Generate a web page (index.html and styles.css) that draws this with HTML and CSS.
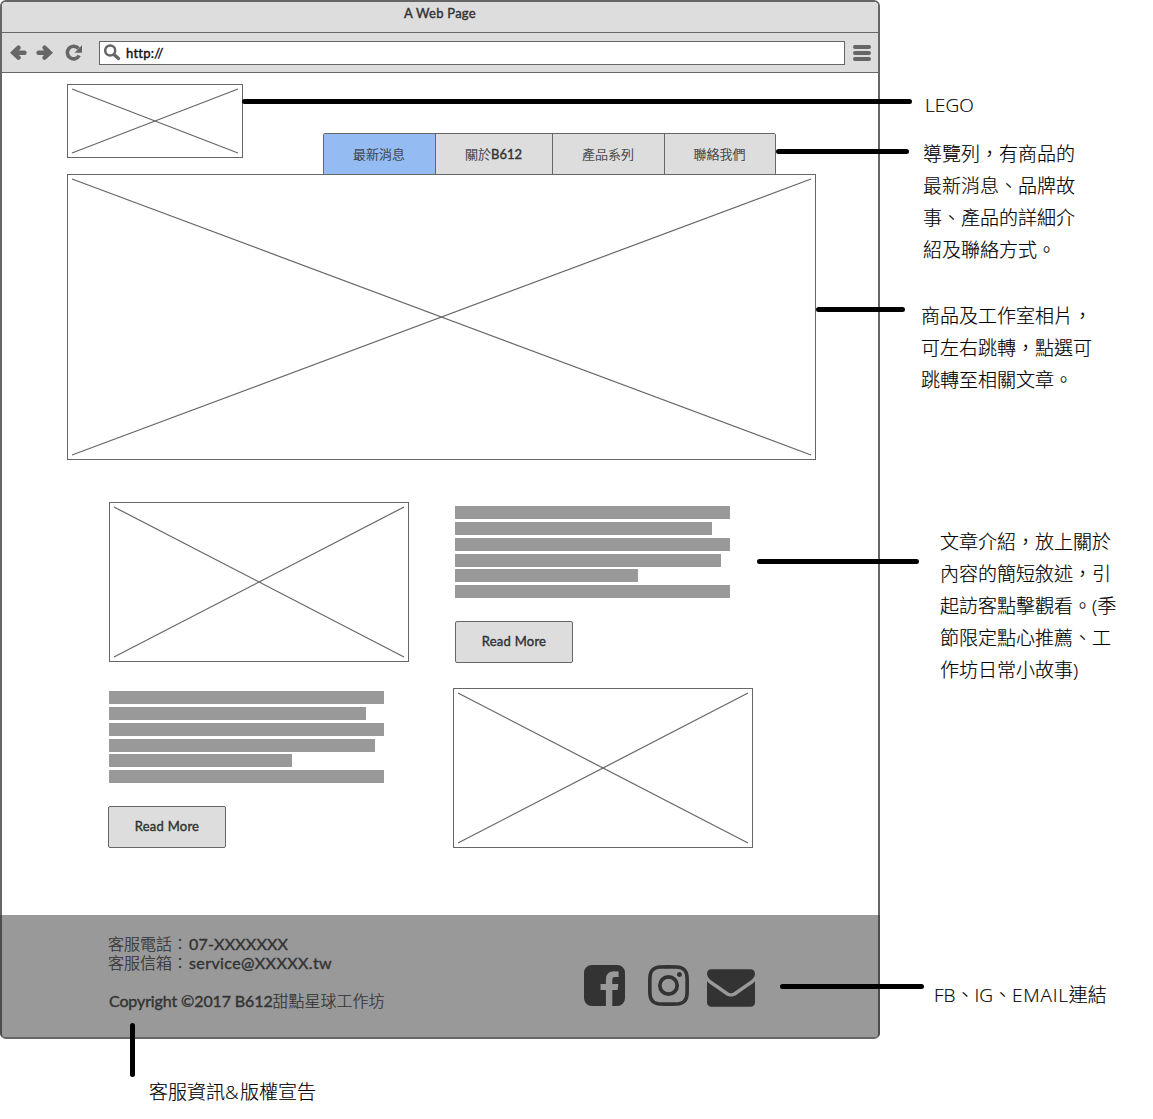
FILE: index.html
```html
<!DOCTYPE html>
<html lang="zh-Hant">
<head>
<meta charset="utf-8">
<title>A Web Page</title>
<link rel="stylesheet" href="styles.css">
</head>
<body>
<div class="board">
  <div class="browser">
    <div class="titlebar"><span class="page-title">A Web Page</span></div>
    <div class="toolbar">
      <svg class="nav-icons" width="74" height="20" viewBox="0 0 74 20" fill="none" stroke="#666">
        <path d="M14.500 9.700H4.500M8.500 4.700L3.200 9.700l5.300 5" stroke-width="4.400" stroke-linecap="round"/>
        <path d="M28.500 9.700h10M34.500 4.700L39.800 9.700l-5.300 5" stroke-width="4.400" stroke-linecap="round"/>
        <path d="M69.200 12.500A6.300 6.300 0 1 1 68.500 5.500" stroke-width="3.600"/>
        <path d="M72 2.200v7.500h-7.500z" fill="#666" stroke="none"/>
      </svg>
      <div class="address">
        <svg width="18" height="18" viewBox="0 0 18 18" fill="none" stroke="#666">
          <circle cx="6.200" cy="6.500" r="5" stroke-width="2.500"/>
          <path d="M10.500 11l4 3.500" stroke-width="3.400" stroke-linecap="round"/>
        </svg>
        <span class="url">http://</span>
      </div>
      <div class="menu"><i></i><i></i><i></i></div>
    </div>
    <div class="page">
      <header class="header">
        <div class="placeholder logo"><svg><line x2="100%" y2="100%"/><line x1="100%" x2="0" y2="100%"/></svg></div>
        <nav class="tabs">
          <a class="tab active">最新消息</a>
          <a class="tab wide">關於<span class="latin">B612</span></a>
          <a class="tab">產品系列</a>
          <a class="tab last">聯絡我們</a>
        </nav>
      </header>
      <div class="placeholder hero"><svg><line x2="100%" y2="100%"/><line x1="100%" x2="0" y2="100%"/></svg></div>
      <main class="articles">
        <section class="article">
          <div class="placeholder photo"><svg><line x2="100%" y2="100%"/><line x1="100%" x2="0" y2="100%"/></svg></div>
          <div class="summary">
            <div class="lines"><i></i><i class="l2"></i><i></i><i class="l4"></i><i class="l5"></i><i></i></div>
            <a class="button">Read More</a>
          </div>
        </section>
        <section class="article reverse">
          <div class="summary">
            <div class="lines"><i></i><i class="l2"></i><i></i><i class="l4"></i><i class="l5"></i><i></i></div>
            <a class="button">Read More</a>
          </div>
          <div class="placeholder photo"><svg><line x2="100%" y2="100%"/><line x1="100%" x2="0" y2="100%"/></svg></div>
        </section>
      </main>
    </div>
    <footer class="footer">
      <div class="contact">
        <p>客服電話：<span class="phone">07-XXXXXXX</span></p>
        <p>客服信箱：<span class="mail">service@XXXXX.tw</span></p>
        <p class="copyright"><span class="copy">Copyright ©2017 B612</span>甜點星球工作坊</p>
      </div>
      <div class="social">
        <svg width="41" height="41" viewBox="0 128 1536 1536"><path d="M1248 128q119 0 203.500 84.500t84.500 203.500v960q0 119-84.500 203.500t-203.500 84.500h-188v-595h199l30-232h-229v-148q0-56 23.500-84t91.500-28l122-1v-207q-63-9-178-9-136 0-217.500 80t-81.500 226v171h-200v232h200v595h-532q-119 0-203.500-84.500t-84.500-203.500v-960q0-119 84.500-203.500t203.500-84.500h960z"/></svg>
        <svg class="ig" width="41" height="41" viewBox="0 128 1536 1536"><path d="M1024 896q0-106-75-181t-181-75-181 75-75 181 75 181 181 75 181-75 75-181zm138 0q0 164-115 279t-279 115-279-115-115-279 115-279 279-115 279 115 115 279zm108-410q0 38-27 65t-65 27-65-27-27-65 27-65 65-27 65 27 27 65zm-502-220q-7 0-76.500-.5t-105.500 0-96.500 3-103 10-71.500 18.500q-50 20-88 58t-58 88q-11 29-18.500 71.500t-10 103-3 96.500 0 105.500.5 76.500-.5 76.500 0 105.500 3 96.500 10 103 18.500 71.500q20 50 58 88t88 58q29 11 71.500 18.500t103 10 96.500 3 105.500 0 76.500-.5 76.500.5 105.500 0 96.500-3 103-10 71.500-18.500q50-20 88-58t58-88q11-29 18.500-71.500t10-103 3-96.500 0-105.500-.5-76.500.5-76.500 0-105.500-3-96.500-10-103-18.500-71.500q-20-50-58-88t-88-58q-29-11-71.500-18.500t-103-10-96.500-3-105.500 0-76.500.5zm768 630q0 229-5 317-10 208-124 322t-322 124q-88 5-317 5t-317-5q-208-10-322-124t-124-322q-5-88-5-317t5-317q10-208 124-322t322-124q88-5 317-5t317 5q208 10 322 124t124 322q5 88 5 317z"/></svg>
        <svg class="envelope" width="48" height="38" viewBox="0 256 1792 1408"><path d="M1792 710v794q0 66-47 113t-113 47h-1472q-66 0-113-47t-47-113v-794q44 49 101 87 362 246 497 345 57 42 92.500 65.500t94.500 48 110 24.500h2q51 0 110-24.500t94.500-48 92.500-65.500q170-123 498-345 57-39 100-87zm0-294q0 79-49 151t-122 123q-376 261-468 325-10 7-42.500 31t-54 38.500-52 32.500-57.500 27-50 9h-2q-23 0-50-9t-57.500-27-52-32.500-54-38.500-42.500-31q-91-64-262-182.500t-205-142.500q-62-42-117-115.500t-55-136.500q0-78 41.500-130t118.500-52h1472q65 0 112.500 47t47.500 113z"/></svg>
      </div>
    </footer>
  </div>
  <aside class="notes">
    <p class="note note-logo">LEGO</p>
    <p class="note note-nav">導覽列，有商品的<br>最新消息、品牌故<br>事、產品的詳細介<br>紹及聯絡方式。</p>
    <p class="note note-hero">商品及工作室相片，<br>可左右跳轉，點選可<br>跳轉至相關文章。</p>
    <p class="note note-article">文章介紹，放上關於<br>內容的簡短敘述，引<br>起訪客點擊觀看。(季<br>節限定點心推薦、工<br>作坊日常小故事)</p>
    <p class="note note-social">FB、IG、<span class="email">EMAIL</span>連結</p>
  </aside>
  <p class="note note-footer">客服資訊<span class="amp">&amp;</span>版權宣告</p>
  <svg class="connectors" width="1153" height="1119" viewBox="0 0 1153 1119">
    <path d="M244.500 101.500H909.500M778.500 151.500H906.500M818.500 309.500H902.500M759.500 561.500H916.500M782.500 986.500H921.500M132.500 1025.500V1074.500"/>
  </svg>
</div>
</body>
</html>
```
FILE: styles.css
```css
* { box-sizing: border-box; }
body { margin: 0; background: #fff; color: #333; font-family: Lato, "Noto Sans CJK TC", sans-serif; }
p { margin: 0; }
i { display: block; }
svg { display: block; flex: none; }

.board {
  position: relative;
  display: grid;
  grid-template-columns: 880px 273px;
  grid-template-rows: 1039px 80px;
  width: 1153px;
  height: 1119px;
  overflow: hidden;
}
.browser {
  display: flex;
  flex-direction: column;
  border: 2px solid #666;
  border-radius: 6px;
}
.page-title, .url, .latin, .button, .contact span {
  font-weight: 400;
  -webkit-text-stroke: .4px currentColor;
}
.titlebar {
  height: 31px;
  border-radius: 4px 4px 0 0;
  background: #ddd;
  border-bottom: 1px solid #666;
  text-align: center;
  font-size: 13px;
  line-height: 23px;
}
.page-title { letter-spacing: .25px; }
.toolbar {
  display: flex;
  align-items: center;
  height: 40px;
  padding: 0 7px 0 8px;
  background: #ddd;
  border-bottom: 1px solid #666;
}
.address {
  display: flex;
  align-items: center;
  width: 746px;
  height: 24px;
  margin-left: 15px;
  padding-left: 4px;
  background: #fff;
  border: 1px solid #666;
  color: #111;
  font-size: 13px;
}
.url { margin-left: 4px; letter-spacing: .25px; }
.menu { display: grid; gap: 2px; width: 18px; margin-left: 8px; }
.menu i { height: 4px; border-radius: 2px; background: #666; }

.page { height: 842px; padding: 0 63px 0 65px; }
.header { display: flex; height: 101px; padding-top: 11px; }
.placeholder { border: 1px solid #666; padding: 4px; }
.placeholder svg { width: 100%; height: 100%; overflow: visible; stroke: #666; stroke-width: 1.200; }
.logo { width: 176px; height: 74px; }
.tabs {
  display: flex;
  align-self: flex-end;
  height: 42px;
  margin: 0 0 -1px 80px;
  border: 1px solid #666;
  border-radius: 2px;
}
.tab {
  width: 112px;
  padding-right: 1px;
  border-right: 1px solid #666;
  background: #ddd;
  text-align: center;
  font-size: 13px;
  font-weight: 300;
  line-height: 40px;
  -webkit-text-stroke: .2px currentColor;
}
.tab.active { background: #94bbf2; }
.tab.wide { width: 117px; }
.tab.last { width: 110px; border-right: 0; }
.hero { width: 749px; height: 286px; }

.articles { display: grid; gap: 26px; padding: 42px 0 0 42px; }
.article { display: flex; gap: 46px; height: 160px; }
.article.reverse { gap: 69px; }
.photo { width: 300px; height: 160px; }
.summary { width: 275px; padding-top: 4px; }
.reverse .summary { padding-top: 3px; }
.lines { display: grid; gap: 3px; }
.lines i { height: 13px; background: #999; }
.lines .l2 { width: 257px; }
.lines .l4 { width: 266px; }
.lines .l5 { width: 183px; margin-top: -1px; }
.button {
  display: block;
  width: 118px;
  height: 42px;
  margin-top: 23px;
  border: 1px solid #666;
  border-radius: 2px;
  background: #ddd;
  text-align: center;
  font-size: 13px;
  letter-spacing: .25px;
  line-height: 39px;
}
.reverse .button { margin-left: -1px; }

.footer {
  display: flex;
  height: 122px;
  margin: 0 -2px;
  border: solid #4d4d4d;
  border-width: 0 2px;
  border-radius: 0 0 4px 4px;
  background: #999;
  font-size: 16px;
  font-weight: 300;
}
.contact {
  width: 475px;
  padding: 19px 0 0 106px;
  line-height: 19px;
  white-space: nowrap;
  -webkit-text-stroke: .2px currentColor;
}
.contact .phone { margin-left: 1px; letter-spacing: .2px; }
.contact .mail { margin-left: 1px; letter-spacing: .4px; }
.contact .copy { margin-left: 1px; letter-spacing: -.12px; }
.copyright { margin-top: 19px; }
.social { display: flex; margin: 50px 0 0 107px; fill: #333; }
.ig { margin-left: 23px; }
.envelope { margin: 4px 0 0 18px; }

.notes { padding-left: 41px; }
.note {
  color: #000;
  font-family: "Open Sans", "Noto Sans CJK TC", sans-serif;
  font-size: 19px;
  font-weight: 300;
  line-height: 32px;
  white-space: nowrap;
  -webkit-text-stroke: .15px #000;
}
.note-logo { margin: 89px 0 0 4px; letter-spacing: .1px; }
.note-nav { margin: 17px 0 0 2px; }
.note-hero { margin-top: 34px; }
.note-article { margin: 130px 0 0 19px; }
.note-social { margin: 293px 0 0 13px; }
.email { letter-spacing: .8px; }
.amp { letter-spacing: 1.500px; }
.note-footer { margin: 37px 0 0 149px; }
.connectors {
  position: absolute;
  inset: 0;
  fill: none;
  stroke: #000;
  stroke-width: 5;
  stroke-linecap: round;
}
```
